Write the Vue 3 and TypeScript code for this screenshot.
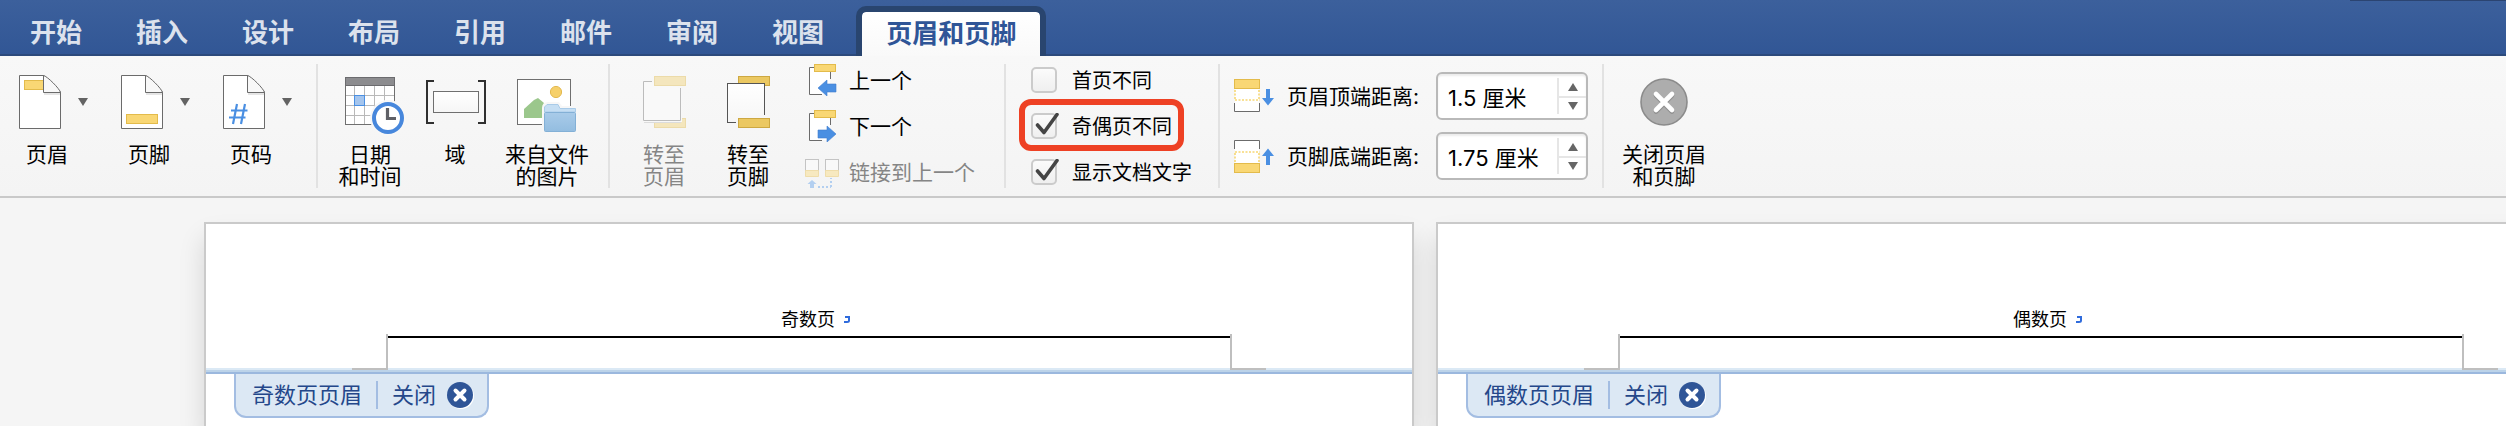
<script setup lang="ts">
import { ref } from 'vue'

interface MenuItem { id: string; label: string }
interface Sheet { id: string; text: string; tag: string }

const tabs: string[] = ['开始', '插入', '设计', '布局', '引用', '邮件', '审阅', '视图', '页眉和页脚']
const activeTab = ref('页眉和页脚')

const menus: MenuItem[] = [
  { id: 'header', label: '页眉' },
  { id: 'footer', label: '页脚' },
  { id: 'number', label: '页码' },
]

const options = ref([
  { id: 'first', label: '首页不同', checked: false, marked: false },
  { id: 'oddeven', label: '奇偶页不同', checked: true, marked: true },
  { id: 'showdoc', label: '显示文档文字', checked: true, marked: false },
])

const distances = ref([
  { id: 'top', label: '页眉顶端距离:', value: 1.5 },
  { id: 'bottom', label: '页脚底端距离:', value: 1.75 },
])

function step(index: number, delta: number) {
  const item = distances.value[index]
  item.value = Math.max(0, Math.round((item.value + delta) * 100) / 100)
}

const sheets: Sheet[] = [
  { id: 'odd', text: '奇数页', tag: '奇数页页眉' },
  { id: 'even', text: '偶数页', tag: '偶数页页眉' },
]
</script>

<template>
  <div class="app">
    <svg class="defs" width="0" height="0" aria-hidden="true">
      <defs>
        <linearGradient id="paper" x1="0" y1="0" x2="0" y2="1">
          <stop offset="0" stop-color="#ffffff" /><stop offset="1" stop-color="#f6f6f6" />
        </linearGradient>
        <linearGradient id="folder" x1="0" y1="0" x2="0" y2="1">
          <stop offset="0" stop-color="#a9cbe9" /><stop offset="1" stop-color="#93bde0" />
        </linearGradient>
      </defs>
    </svg>

    <nav class="tabs">
      <button
        v-for="tab in tabs"
        :key="tab"
        type="button"
        class="tab"
        :class="{ active: tab === activeTab }"
        @click="activeTab = tab"
      >{{ tab }}</button>
    </nav>

    <div class="ribbon">
      <section class="group group-menus">
        <button v-for="m in menus" :key="m.id" type="button" class="menu-button">
          <svg class="menu-icon" width="44" height="64" viewBox="18 72 44 64">
            <path d="M19.500 75.500H44L60.500 92V128.500H19.500Z" fill="#fff" stroke="#6b6b6b" stroke-linejoin="round" />
            <rect v-if="m.id === 'header'" x="24.500" y="80.500" width="20" height="9" fill="#f9d774" stroke="#e3bb4b" />
            <rect v-if="m.id === 'footer'" x="24.500" y="114.500" width="31" height="9" fill="#f9d774" stroke="#e3bb4b" />
            <path v-if="m.id === 'number'" d="M33 104L29 124M41 104L37 124M27 110.500H43.500M25 117.500H41.500" fill="none" stroke="#4a8fe2" stroke-width="2.200" />
            <path d="M43.500 75.500C47 76 60 89 60.500 92.500H43.500Z" fill="#f8f8f8" stroke="#6b6b6b" stroke-linejoin="round" />
            <path d="M44 94H60" stroke="#000" stroke-opacity=".1" stroke-width="2" />
          </svg>
          <svg class="caret" width="10" height="64" viewBox="78 72 10 64"><path d="M78 98H88L83 106Z" fill="#636363" /></svg>
          <span class="menu-label">{{ m.label }}</span>
        </button>
      </section>

      <section class="group group-insert">
        <button type="button" class="big-button">
          <svg width="72" height="64" viewBox="334 72 72 64">
            <rect x="345.500" y="77.500" width="49" height="47" fill="#fff" stroke="#6f6f6f" />
            <path d="M354.500 86V124M364.500 86V124M374.500 86V124M384.500 86V124M346 95.500H394M346 105.500H394M346 115.500H394" stroke="#b9b9b9" />
            <rect x="345.500" y="77.500" width="49" height="8" fill="#8c8c8f" stroke="#6b6b6e" />
            <rect x="354.500" y="95.500" width="10" height="10" fill="#a5c5ed" stroke="#4a8fe2" />
            <circle cx="388" cy="118" r="18" fill="#f7f7f7" />
            <circle cx="388" cy="118" r="14" fill="#fff" stroke="#4787dc" stroke-width="4" />
            <path d="M387.500 108V118.500H396" fill="none" stroke="#5f6066" stroke-width="3.200" />
          </svg>
          <span>日期<br>和时间</span>
        </button>
        <button type="button" class="big-button">
          <svg width="66" height="64" viewBox="422 72 66 64">
            <path d="M434 81H427V123H434M478 81H485V123H478" fill="none" stroke="#303030" stroke-width="2" />
            <rect x="433.500" y="91.500" width="45" height="21" fill="url(#paper)" stroke="#6f6f6f" />
          </svg>
          <span>域</span>
        </button>
        <button type="button" class="big-button">
          <svg width="86" height="64" viewBox="504 72 86 64">
            <rect x="517.500" y="79.500" width="53" height="45" fill="#fff" stroke="#6f6f6f" />
            <circle cx="556" cy="92" r="5.600" fill="#f6d06a" stroke="#e3b94f" />
            <path d="M524 118V109L534 100L538 98L544 103V118Z" fill="#9bc78c" />
            <path d="M542 132V108Q542 102 548 102H559L562 106H578V133Z" fill="#f7f7f7" />
            <path d="M544.500 112V107L547 104.500H558L560 108.500H575.500V112Z" fill="#c5def3" stroke="#a9cbe8" />
            <rect x="544.500" y="112.500" width="31" height="19" rx="1" fill="url(#folder)" stroke="#83b0d6" />
          </svg>
          <span>来自文件<br>的图片</span>
        </button>
      </section>

      <section class="group group-navigate">
        <button type="button" class="big-button" disabled>
          <svg width="48" height="64" viewBox="640 72 48 64">
            <rect x="654.500" y="118.500" width="31" height="9" fill="#f4e6bd" stroke="#ecdba9" />
            <path d="M650 80H643V122H682V88L678 84H650Z" fill="#f8f8f8" />
            <path d="M652 81.500H643.500V120.500H680.500V88" fill="#f9f9f9" stroke="#bcbcbc" />
            <rect x="654.500" y="76.500" width="31" height="9" fill="#f4e6bd" stroke="#ecdba9" />
            <path d="M644 122.500H681" stroke="#dcdcdc" />
          </svg>
          <span>转至<br>页眉</span>
        </button>
        <button type="button" class="big-button">
          <svg width="48" height="64" viewBox="724 72 48 64">
            <rect x="738.500" y="76.500" width="31" height="9" fill="#ebc862" stroke="#cda842" />
            <rect x="727.500" y="83.500" width="37" height="39" fill="url(#paper)" stroke="#555" />
            <path d="M736 125V119L739 115H768V125Z" fill="#f7f7f7" />
            <rect x="738.500" y="118.500" width="31" height="9" fill="#ebc862" stroke="#cda842" />
          </svg>
          <span>转至<br>页脚</span>
        </button>
        <div class="rows nav-rows">
          <button type="button" class="row-button">
            <svg width="36" height="32" viewBox="804 64 36 32">
              <path d="M814 67.500H809.500V94.500H822M830.500 72V79" fill="none" stroke="#6b6b6b" />
              <path d="M810 68H830V94H810Z" fill="#fff" />
              <rect x="814.500" y="64.500" width="21" height="7" fill="#f9d774" stroke="#e3bb4b" />
              <path d="M818 88L827 80V84H836V92H827V96Z" fill="#4a8fe2" stroke="#3f7ccd" stroke-width=".6" />
            </svg>
            <span class="row-label">上一个</span>
          </button>
          <button type="button" class="row-button">
            <svg width="36" height="32" viewBox="804 64 36 32">
              <path d="M814 67.500H809.500V94.500H822M830.500 72V79" fill="none" stroke="#6b6b6b" />
              <path d="M810 68H830V94H810Z" fill="#fff" />
              <rect x="814.500" y="64.500" width="21" height="7" fill="#f9d774" stroke="#e3bb4b" />
              <path d="M836 88L827 80V84H818V92H827V96Z" fill="#4a8fe2" stroke="#3f7ccd" stroke-width=".6" />
            </svg>
            <span class="row-label">下一个</span>
          </button>
          <button type="button" class="row-button" disabled>
            <svg width="36" height="32" viewBox="804 156 36 32">
              <rect x="805.500" y="159.500" width="13" height="16" fill="#f9f9f9" stroke="#c4c4c4" />
              <rect x="825.500" y="159.500" width="13" height="16" fill="#f9f9f9" stroke="#c4c4c4" />
              <path d="M805.500 170.500H818.500V176.500H805.500ZM825.500 170.500H838.500V176.500H825.500Z" fill="#f7e9c0" stroke="#efddaa" />
              <path d="M812 180L816.500 184H814V188H810V184H807.500Z" fill="#b3cff0" />
              <path d="M818 187H831M831 187V178" fill="none" stroke="#b3cff0" stroke-width="2" stroke-dasharray="2 2" />
            </svg>
            <span class="row-label">链接到上一个</span>
          </button>
        </div>
      </section>

      <section class="group group-options">
        <div class="rows">
          <label v-for="o in options" :key="o.id" class="option" :class="{ marked: o.marked }">
            <span class="box">
              <input v-model="o.checked" type="checkbox">
              <svg v-if="o.checked" class="tick" width="30" height="26" viewBox="0 0 30 26">
                <path d="M6.500 12L13 19.500L26 1.500" fill="none" stroke="#444" stroke-width="3.600" stroke-linecap="round" stroke-linejoin="round" />
              </svg>
            </span>
            <span class="row-label">{{ o.label }}</span>
          </label>
        </div>
      </section>

      <section class="group group-distance">
        <div v-for="(d, i) in distances" :key="d.id" class="distance">
          <svg v-if="d.id === 'top'" width="40" height="36" viewBox="1234 77 40 36">
            <rect x="1234.500" y="78.500" width="25" height="9" fill="#f9d774" stroke="#e3bb4b" />
            <path d="M1235 88H1259V110H1235Z" fill="#fff" />
            <path d="M1235 89V99M1259 89V99M1235 99H1260" fill="none" stroke="#f7d774" stroke-width="1.600" stroke-dasharray="2 1.500" />
            <path d="M1234.500 102V110.500H1259.500V102" fill="none" stroke="#6b6b6b" />
            <path d="M1266 88H1270V97H1274L1268 104.500L1262 97H1266Z" fill="#4a8fe2" />
          </svg>
          <svg v-else width="40" height="36" viewBox="1234 137 40 36">
            <rect x="1234.500" y="162.500" width="25" height="9" fill="#f9d774" stroke="#e3bb4b" />
            <path d="M1235 140H1259V162H1235Z" fill="#fff" />
            <path d="M1235 161V151M1259 161V151M1235 151H1260" fill="none" stroke="#f7d774" stroke-width="1.600" stroke-dasharray="2 1.500" />
            <path d="M1234.500 148V139.500H1259.500V148" fill="none" stroke="#6b6b6b" />
            <path d="M1266 164H1270V155H1274L1268 147.500L1262 155H1266Z" fill="#4a8fe2" />
          </svg>
          <label :for="'distance-' + d.id">{{ d.label }}</label>
          <div class="field">
            <input :id="'distance-' + d.id" type="text" :value="d.value + ' 厘米'">
            <div class="spinner">
              <button type="button" aria-label="增加" @click="step(i, 0.1)">
                <svg width="10" height="8" viewBox="0 0 10 8"><path d="M0 8L5 0L10 8Z" fill="#666" /></svg>
              </button>
              <button type="button" aria-label="减少" @click="step(i, -0.1)">
                <svg width="10" height="8" viewBox="0 0 10 8"><path d="M0 0L5 8L10 0Z" fill="#666" /></svg>
              </button>
            </div>
          </div>
        </div>
      </section>

      <section class="group group-close">
        <button type="button" class="big-button">
          <svg width="56" height="64" viewBox="1636 72 56 64">
            <circle cx="1664" cy="102" r="23" fill="#adadad" stroke="#8b8b8b" stroke-width="1.600" />
            <path d="M1656 95.500L1672 111.500M1672 95.500L1656 111.500" stroke="#8f8f8f" stroke-width="4.600" stroke-linecap="round" />
            <path d="M1656 94L1672 110M1672 94L1656 110" stroke="#fff" stroke-width="4.600" stroke-linecap="round" />
          </svg>
          <span>关闭页眉<br>和页脚</span>
        </button>
      </section>
    </div>

    <main class="workspace">
      <article v-for="s in sheets" :key="s.id" class="sheet">
        <header class="sheet-header">
          <p class="header-text">
            <span>{{ s.text }}</span>
            <svg width="8" height="8" viewBox="0 0 8 8"><path d="M2 1H6V4.500Q6 6 4 6H1" fill="none" stroke="#2f6bdc" stroke-width="2" /></svg>
          </p>
          <div class="margin-frame"></div>
        </header>
        <div class="boundary"></div>
        <div class="tag">
          <span>{{ s.tag }}</span>
          <i class="tag-divider"></i>
          <button type="button" class="tag-close">
            <span>关闭</span>
            <svg width="28" height="28" viewBox="0 0 28 28">
              <circle cx="14" cy="15" r="13" fill="#fff" />
              <circle cx="13" cy="14" r="13" fill="#2f5597" />
              <path d="M8.500 9.500L17.500 18.500M17.500 9.500L8.500 18.500" stroke="#fff" stroke-width="4" stroke-linecap="round" />
            </svg>
          </button>
        </div>
      </article>
    </main>
  </div>
</template>

<style>
body {
  margin: 0;
}
</style>

<style scoped>
.app {
  display: flex;
  flex-direction: column;
  min-height: 100vh;
  overflow: hidden;
  background: #f5f5f5;
  color: #000;
  font-family: Inter, "Noto Sans CJK SC", sans-serif;
  font-size: 21px;
  line-height: 22px;
}
.app *,
.app *::before,
.app *::after {
  box-sizing: border-box;
}
.defs {
  position: absolute;
}
svg {
  display: block;
  flex: none;
}
button {
  margin: 0;
  padding: 0;
  border: 0;
  background: none;
  color: inherit;
  font: inherit;
  white-space: nowrap;
}
button:disabled {
  color: #858585;
}

.tabs {
  position: relative;
  display: flex;
  align-items: flex-end;
  padding: 6px 0 0 3px;
  background: linear-gradient(#2c4a7c, #2c4a7c) bottom / 100% 2px no-repeat, linear-gradient(#3c609c, #315695);
}
.tabs::after {
  content: "";
  position: absolute;
  top: 0;
  right: 0;
  width: 156px;
  height: 1px;
  background: #2b4471;
}
.tab {
  height: 50px;
  padding: 4px 27px 0;
  color: #dce2ed;
  font-size: 26px;
  font-weight: 600;
  line-height: 46px;
}
.tab.active {
  margin-left: 5px;
  padding: 0 24px;
  border: 6px solid #29456f;
  border-bottom: 0;
  border-radius: 10px 10px 0 0;
  background: #29456f linear-gradient(#fff, #f9f9f9) padding-box;
  color: #2f5597;
  line-height: 42px;
}

.ribbon {
  display: flex;
  padding: 8px 0;
  border-bottom: 2px solid #c9c9c9;
  background: linear-gradient(#f8f8f8, #f4f4f4);
}
.group {
  display: flex;
  flex: none;
  min-height: 124px;
  border-right: 2px solid #e2e2e2;
}
.group-menus {
  gap: 30px;
  padding: 0 22px 0 18px;
}
.group-insert {
  gap: 16px;
  padding: 0 18px 0 16px;
}
.group-navigate {
  gap: 36px;
  padding: 0 29px 0 30px;
}
.group-options {
  padding: 0 26px 0 25px;
}
.group-distance {
  flex-direction: column;
  gap: 12px;
  padding: 8px 14px 0;
}
.group-close {
  padding: 0 18px;
  border-right: 0;
}

.menu-button {
  display: grid;
  grid-template-columns: 58px 12px;
  column-gap: 2px;
  row-gap: 8px;
  align-content: start;
  padding-top: 8px;
}
.menu-label {
  text-align: center;
}
.big-button {
  display: flex;
  flex-direction: column;
  align-items: center;
  gap: 8px;
  padding-top: 8px;
  text-align: center;
}

.rows {
  display: flex;
  flex-direction: column;
  align-items: flex-start;
  gap: 14px;
}
.row-label {
  padding-top: 2px;
}
.nav-rows {
  margin-left: -4px;
}
.row-button {
  display: flex;
  align-items: center;
  gap: 9px;
  height: 32px;
}
.option {
  position: relative;
  display: flex;
  align-items: center;
  gap: 15px;
  height: 32px;
  font-size: 20px;
  white-space: nowrap;
}
.option.marked::after {
  content: "";
  position: absolute;
  inset: -11px -12px -9px -12px;
  border: 6px solid #ee4124;
  border-radius: 12px;
  pointer-events: none;
}
.box {
  position: relative;
  width: 26px;
  height: 26px;
}
.box input {
  display: block;
  width: 26px;
  height: 26px;
  margin: 0;
  border: 2px solid #cbcbcb;
  border-radius: 5px;
  appearance: none;
  background: linear-gradient(#fbfbfb, #efefef);
}
.tick {
  position: absolute;
  top: 0;
  left: 0;
  pointer-events: none;
}

.distance {
  display: flex;
  align-items: center;
  gap: 13px;
}
.distance label {
  flex: 1;
  padding-top: 2px;
  white-space: nowrap;
}
.group-distance .distance {
  width: 354px;
}
.field {
  display: flex;
  align-items: center;
  width: 152px;
  height: 48px;
  border: 2px solid #b9b9b9;
  border-radius: 6px;
  background: #fff;
  box-shadow: inset 0 2px 2px #ececec;
}
.field input {
  flex: 1;
  min-width: 0;
  height: 40px;
  padding: 0 0 0 10px;
  border: 0;
  outline: 0;
  background: none;
  color: #000;
  font: inherit;
  font-size: 22px;
}
.spinner {
  display: flex;
  flex-direction: column;
  width: 29px;
  border-left: 2px solid #e6e6e6;
}
.spinner button {
  display: flex;
  align-items: center;
  justify-content: center;
  height: 18px;
}
.spinner button + button {
  border-top: 2px solid #e6e6e6;
}

.workspace {
  display: flex;
  flex: 1;
  gap: 22px;
  padding: 24px 0 0 204px;
  overflow: hidden;
}
.sheet {
  flex: none;
  width: calc(50vw - 43px);
  min-height: 204px;
  border: 2px solid #cacaca;
  border-bottom: 0;
  background: #fff;
  box-shadow: 0 16px 24px rgba(0, 0, 0, 0.13);
}
.sheet-header {
  padding: 85px 180px 0;
}
.header-text {
  display: flex;
  align-items: center;
  justify-content: center;
  gap: 8px;
  margin: 0;
  padding: 0 0 3px 14px;
  font-size: 18px;
}
.margin-frame {
  position: relative;
  height: 34px;
  border: solid #bfbfbf;
  border-width: 0 2px;
  background: linear-gradient(#000, #000) 0 2px / 100% 2px no-repeat;
}
.margin-frame::before,
.margin-frame::after {
  content: "";
  position: absolute;
  bottom: -2px;
  width: 36px;
  height: 2px;
  background: #bfbfbf;
}
.margin-frame::before {
  left: -36px;
}
.margin-frame::after {
  right: -36px;
}
.boundary {
  height: 6px;
  background: linear-gradient(#dbe9f5 2px, #bcd3e9 2px, #bcd3e9 4px, #9bb8de 4px);
}
.tag {
  display: flex;
  align-items: center;
  gap: 14px;
  width: max-content;
  height: 44px;
  margin-left: 28px;
  padding: 0 12px 0 16px;
  border: 2px solid #a3bde2;
  border-top: 0;
  border-radius: 0 0 12px 12px;
  background: #dce8f4;
  color: #24478a;
  font-size: 22px;
}
.tag-divider {
  width: 2px;
  height: 28px;
  background: #a3bde2;
}
.tag-close {
  display: flex;
  align-items: center;
  gap: 11px;
}
</style>
